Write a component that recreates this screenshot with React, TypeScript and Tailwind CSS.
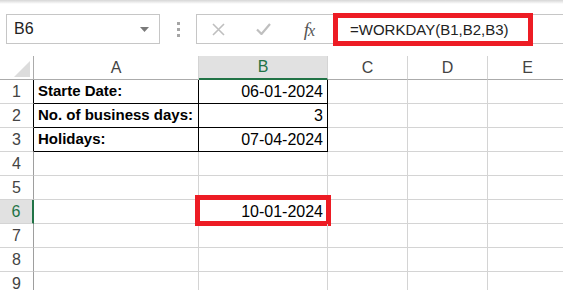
import React from "react";

type Row = { n: number; a?: string; b?: string; active?: boolean; boxed?: boolean };

const rows: Row[] = [
  { n: 1, a: "Starte Date:", b: "06-01-2024", boxed: true },
  { n: 2, a: "No. of business days:", b: "3", boxed: true },
  { n: 3, a: "Holidays:", b: "07-04-2024", boxed: true },
  { n: 4 },
  { n: 5 },
  { n: 6, b: "10-01-2024", active: true },
  { n: 7 },
  { n: 8 },
  { n: 9 },
];

export default function App() {
  return (
    <div
      className="w-[563px] h-[290px] overflow-hidden bg-white relative"
      style={{ fontFamily: '"Liberation Sans", Arial, sans-serif' }}
    >
      {/* top shading */}
      <div className="h-[4px] bg-gradient-to-b from-[#d6d6d6] to-white" />
      <div className="h-[10px]" />

      {/* formula bar row */}
      <div className="h-[30px] flex">
        <div className="ml-[6px] w-[154px] h-full border border-[#c6c6c6] flex items-center justify-between pl-[7px] pr-[10px]">
          <span className="text-[16px] text-[#222] leading-none">B6</span>
          <svg width="9" height="5" viewBox="0 0 9 5">
            <polygon points="0,0 9,0 4.5,5" fill="#7a7a7a" />
          </svg>
        </div>
        <div className="w-[36px] h-full flex flex-col items-center justify-center gap-[3px]">
          <div className="w-[3px] h-[3px] bg-[#a6a6a6]" />
          <div className="w-[3px] h-[3px] bg-[#a6a6a6]" />
          <div className="w-[3px] h-[3px] bg-[#a6a6a6]" />
        </div>
        <div className="flex-1 h-full border-y border-l border-[#c6c6c6] flex">
          <div className="w-[136px] h-full flex items-center">
            <div className="w-[42px] flex justify-center pl-[1px]">
              <svg width="13" height="13" viewBox="0 0 13 13">
                <path d="M1 1 L12 12 M12 1 L1 12" stroke="#bfbfbf" strokeWidth="1.6" fill="none" />
              </svg>
            </div>
            <div className="w-[48px] flex justify-center">
              <svg width="15" height="12" viewBox="0 0 15 12">
                <path d="M1 6.5 L5.5 11 L14 1" stroke="#bfbfbf" strokeWidth="2.2" fill="none" />
              </svg>
            </div>
            <div className="w-[44px] flex justify-center">
              <span
                className="italic text-[19px] text-[#555] leading-none tracking-[-1px]"
                style={{ fontFamily: '"Liberation Serif", "Times New Roman", serif' }}
              >
                f<span className="text-[16px]">x</span>
              </span>
            </div>
          </div>
          <div className="flex-1 h-full relative flex items-center pl-[17px]">
            <span className="text-[15px] text-[#222] leading-none">=WORKDAY(B1,B2,B3)</span>
            <div className="absolute left-0 top-[-2px] w-[200px] h-[33px] border-[5px] border-[#ed1c24] pointer-events-none" />
          </div>
        </div>
      </div>

      <div className="h-[12px]" />

      {/* grid */}
      <div className="grid grid-cols-[34px_165px_129px_80px_80px_80px] auto-rows-[24px]">
        {/* header row */}
        <div className="border-r border-r-[#ababab] border-b border-b-[#ababab] flex items-end justify-end pr-[3px] pb-[2px]">
          <svg width="16" height="16" viewBox="0 0 16 16">
            <polygon points="16,0 16,16 0,16" fill="#dcdcdc" />
          </svg>
        </div>
        <div className="border-r border-r-[#d4d4d4] border-b border-b-[#ababab] flex items-center justify-center text-[16px] text-[#444]">
          A
        </div>
        <div className="bg-[#e1e1e1] border-r border-r-[#d4d4d4] border-b-2 border-b-[#217346] flex items-center justify-center text-[16px] text-[#217346]">
          B
        </div>
        <div className="border-r border-r-[#d4d4d4] border-b border-b-[#ababab] flex items-center justify-center text-[16px] text-[#444]">
          C
        </div>
        <div className="border-r border-r-[#d4d4d4] border-b border-b-[#ababab] flex items-center justify-center text-[16px] text-[#444]">
          D
        </div>
        <div className="border-r border-r-[#d4d4d4] border-b border-b-[#ababab] flex items-center justify-center text-[16px] text-[#444]">
          E
        </div>

        {rows.map((r) => (
          <React.Fragment key={r.n}>
            <div
              className={
                r.active
                  ? "bg-[#e1e1e1] border-r-2 border-r-[#217346] border-b border-b-[#d4d4d4] flex items-center justify-center text-[16px] text-[#217346]"
                  : r.boxed
                  ? "border-r border-r-black border-b border-b-[#d4d4d4] flex items-center justify-center text-[16px] text-[#444]"
                  : "border-r border-r-[#9e9e9e] border-b border-b-[#d4d4d4] flex items-center justify-center text-[16px] text-[#444]"
              }
            >
              {r.n}
            </div>
            <div
              className={
                r.boxed
                  ? "border-r border-r-black border-b border-b-black flex items-center pl-[4px] text-[15px] font-bold text-black whitespace-nowrap"
                  : "border-r border-r-[#d4d4d4] border-b border-b-[#d4d4d4]"
              }
            >
              {r.a}
            </div>
            <div
              className={
                r.boxed
                  ? "border-r border-r-black border-b border-b-black flex items-center justify-end pr-[4px] text-[16px] text-black"
                  : "relative border-r border-r-[#d4d4d4] border-b border-b-[#d4d4d4] flex items-center justify-end pr-[4px] text-[16px] text-black"
              }
            >
              {r.b}
              {r.active && (
                <div className="absolute left-[-4px] top-[-5px] w-[136px] h-[31px] border-[5px] border-[#ed1c24] pointer-events-none" />
              )}
            </div>
            <div className="border-r border-r-[#d4d4d4] border-b border-b-[#d4d4d4]" />
            <div className="border-r border-r-[#d4d4d4] border-b border-b-[#d4d4d4]" />
            <div className="border-r border-r-[#d4d4d4] border-b border-b-[#d4d4d4]" />
          </React.Fragment>
        ))}
      </div>
    </div>
  );
}
